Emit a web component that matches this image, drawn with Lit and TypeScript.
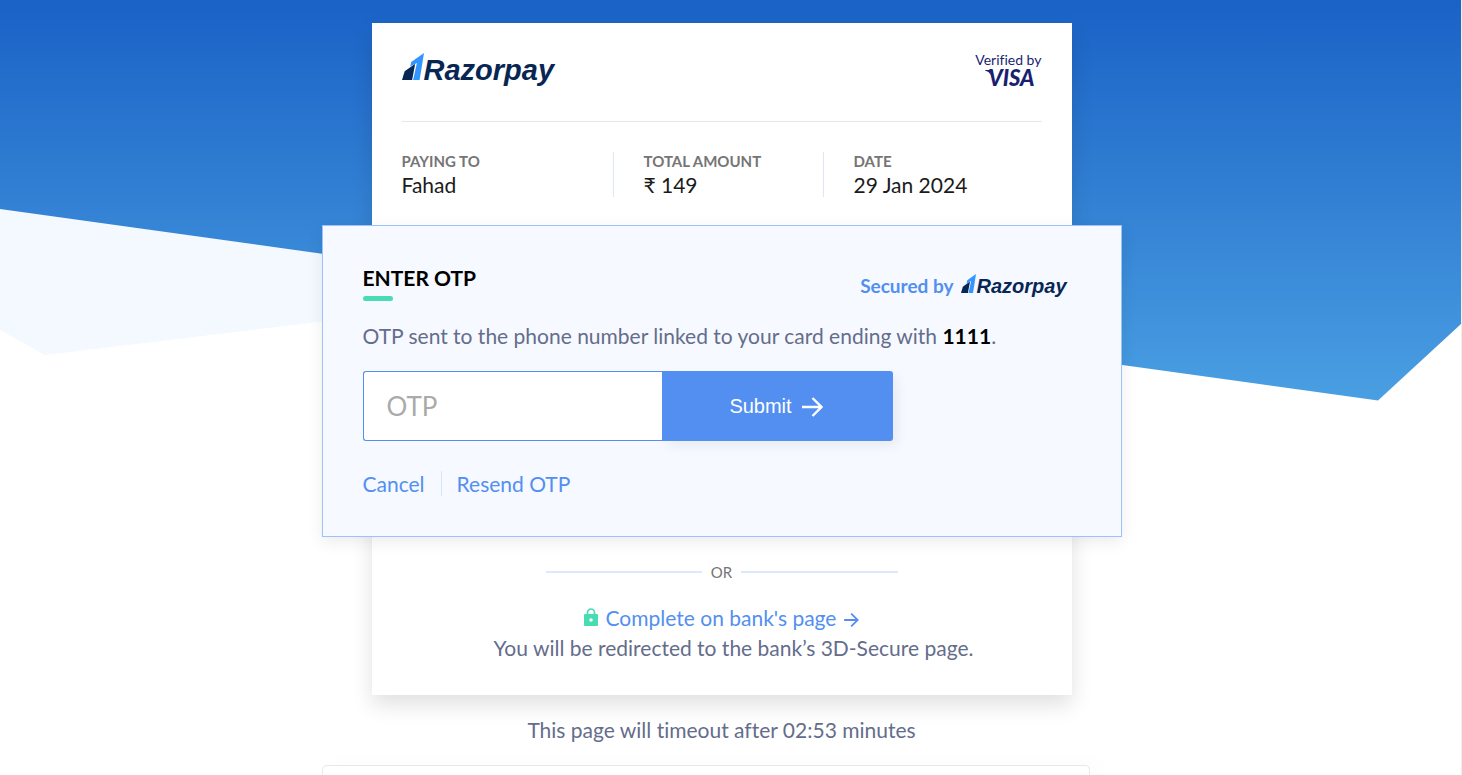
import { LitElement, html, css, svg } from "lit";
import { customElement, property, state } from "lit/decorators.js";

@customElement("razorpay-logo")
class RazorpayLogo extends LitElement {
  static styles = css`
    :host {
      display: inline-flex;
      align-items: flex-end;
      color: #072654;
      font: italic 700 29px/36px "Liberation Sans", Arial, sans-serif;
    }
    .mark {
      display: block;
      width: 22px;
      height: 27px;
      margin-bottom: 8px;
    }
    :host([small]) {
      font-size: 20px;
      line-height: 24px;
    }
    :host([small]) .mark {
      width: 15px;
      height: 19px;
      margin-bottom: 5px;
    }
  `;
  @property({ type: Boolean, reflect: true }) small = false;

  render() {
    return html`
      <svg class="mark" viewBox="0 0 23 26" preserveAspectRatio="none" aria-hidden="true">
        <path fill="#072654" d="M2.800 17.500 13.800 10.300 10.600 26H0z" />
        <path fill="#3395ff" d="M9.600 8.600 23 0 18.400 26h-6.800L15.600 9.600 8.600 13z" />
      </svg>
      <span>Razorpay</span>
    `;
  }
}

const arrow = svg`<path d="M0 10h19M10.500 1l9 9-9 9" fill="none" stroke="currentColor" stroke-width="2.400" />`;

@customElement("app-root")
class AppRoot extends LitElement {
  static styles = css`
    :host {
      display: block;
      position: relative;
      z-index: 0;
      background: #fff;
      color: #646d8b;
      font: 400 21px/30px Lato, "Noto Sans", sans-serif;
      font-variant-ligatures: none;
    }
    * {
      box-sizing: border-box;
    }
    a {
      color: #528ff0;
      text-decoration: none;
    }
    h1,
    p,
    dl,
    dd {
      margin: 0;
    }
    .backdrop {
      position: absolute;
      z-index: -1;
      top: 0;
      left: 0;
      width: 100%;
      height: 401px;
    }
    .page {
      display: flex;
      flex-direction: column;
      align-items: center;
      min-height: 100vh;
      padding: 23px 18px 0 0;
      border-right: 1px solid #eee;
    }
    .card {
      width: 100%;
      max-width: 700px;
      padding: 0 30px 32px;
      background: #fff;
      box-shadow: 0 10px 20px rgba(0, 0, 0, 0.12);
    }
    .top {
      display: flex;
      justify-content: space-between;
      align-items: flex-start;
      height: 99px;
      padding-top: 29px;
      border-bottom: 1px solid #e4e6ea;
    }
    .visa {
      display: flex;
      flex-direction: column;
      align-items: center;
      color: #1a1f71;
      font-size: 14px;
      line-height: 15px;
    }
    .visa b {
      display: flex;
      padding-left: 3px;
      font-style: italic;
      font-weight: 900;
      font-size: 22px;
      line-height: 22px;
    }
    .swash {
      width: 6px;
      height: 5px;
      margin: 3px -3px 0 0;
    }
    .facts {
      display: grid;
      grid-template-columns: 212px 210px 1fr;
      padding: 30px 0 28px;
    }
    .fact + .fact {
      padding-left: 30px;
    }
    .fact:not(:last-child) {
      border-right: 1px solid #dfe7f6;
    }
    dt {
      color: #757575;
      font-size: 15px;
      font-weight: 700;
      line-height: 19px;
    }
    dd {
      padding-top: 2px;
      color: #1b1b1b;
      line-height: 24px;
    }
    .panel {
      margin: 0 -80px;
      padding: 40px;
      background: #f6f9ff;
      border: 1px solid #9cc2fb;
      box-shadow: 0 5px 15px rgba(0, 0, 0, 0.08);
    }
    .panel-head {
      display: flex;
      justify-content: space-between;
      padding-right: 14px;
    }
    h1 {
      color: #000;
      font-size: 21px;
      font-weight: 700;
      line-height: 24px;
    }
    h1::after {
      content: "";
      display: block;
      width: 30px;
      height: 5px;
      margin-top: 6px;
      border-radius: 3px;
      background: #49dbb4;
    }
    .secured {
      display: flex;
      align-items: center;
      gap: 8px;
      height: 40px;
      color: #528ff0;
      font-size: 19px;
      font-weight: 700;
    }
    .sent {
      margin: 15px 0 20px;
    }
    .sent b {
      color: #000;
    }
    .otp {
      display: flex;
      max-width: 530px;
      height: 70px;
    }
    .otp input {
      flex: 1;
      min-width: 0;
      padding: 0 23px;
      border: 1px solid #528ff0;
      border-right: 0;
      border-radius: 3px 0 0 3px;
      background: #fff;
      color: #222;
      font: 400 26px Lato, "Noto Sans", sans-serif;
      outline: 0;
    }
    .otp input::placeholder {
      color: #aaa;
      opacity: 1;
    }
    .otp button {
      display: flex;
      align-items: center;
      justify-content: center;
      gap: 10px;
      width: 231px;
      padding: 0 8px 0 6px;
      border: 0;
      border-radius: 0 3px 3px 0;
      background: #528ff0;
      color: #fff;
      font: 400 20px "Liberation Sans", Arial, sans-serif;
      box-shadow: 5px 5px 12px rgba(0, 0, 0, 0.06);
    }
    .arrow {
      width: 21px;
      height: 20px;
      margin-top: 2px;
    }
    .actions {
      display: flex;
      margin-top: 30px;
      line-height: 25px;
    }
    .actions a + a {
      margin-left: 16px;
      padding-left: 15px;
      border-left: 1px solid #d5e3fb;
    }
    .or {
      display: flex;
      align-items: center;
      gap: 9px;
      max-width: 352px;
      margin: 25px auto 0;
      color: #757575;
      font-size: 15px;
      line-height: 20px;
    }
    .or::before,
    .or::after {
      content: "";
      flex: 1;
      height: 2px;
      background: #dbe8fd;
    }
    .bank {
      display: flex;
      align-items: center;
      justify-content: center;
      gap: 8px;
      margin-top: 21px;
    }
    .lock {
      display: block;
      width: 14px;
      height: 18px;
      margin-bottom: 3px;
    }
    .small-arrow {
      width: 15px;
      height: 14px;
      margin-top: 3px;
    }
    .note {
      padding-left: 24px;
      text-align: center;
    }
    .timeout {
      margin: 20px 0;
    }
    .next {
      flex: 1;
      width: 100%;
      max-width: 768px;
      margin-right: 32px;
      border: 1px solid #e8e8e8;
      border-bottom: 0;
      border-radius: 5px 5px 0 0;
      background: #fff;
      box-shadow: 10px 0 20px rgba(0, 0, 0, 0.03);
    }
  `;

  @state() private facts = [
    ["PAYING TO", "Fahad"],
    ["TOTAL AMOUNT", "₹ 149"],
    ["DATE", "29 Jan 2024"],
  ];

  render() {
    return html`
      <svg class="backdrop" viewBox="0 0 1462 401" preserveAspectRatio="none" aria-hidden="true">
        <defs>
          <linearGradient id="sky" x1="0" y1="0" x2="0" y2="1">
            <stop offset="0" stop-color="#1a62c6" />
            <stop offset="1" stop-color="#4a9fe2" />
          </linearGradient>
        </defs>
        <path fill="#f4f8ff" d="M0 200 700 290V276L45 355 0 330z" />
        <path fill="url(#sky)" d="M0 0H1461V324L1378 400.500 0 209z" />
      </svg>
      <main class="page">
        <section class="card">
          <header class="top">
            <razorpay-logo></razorpay-logo>
            <div class="visa">
              <span>Verified by</span>
              <b><svg class="swash" viewBox="0 0 6 5" aria-hidden="true"><path fill="currentColor" d="M0 0h5l1 5Q4 1.500 0 .6z" /></svg>VISA</b>
            </div>
          </header>
          <dl class="facts">
            ${this.facts.map(([k, v]) => html`<div class="fact"><dt>${k}</dt><dd>${v}</dd></div>`)}
          </dl>
          <div class="panel">
            <div class="panel-head">
              <h1>ENTER OTP</h1>
              <div class="secured"><span>Secured by</span><razorpay-logo small></razorpay-logo></div>
            </div>
            <p class="sent">OTP sent to the phone number linked to your card ending with <b>1111</b>.</p>
            <form class="otp" @submit=${(e: Event) => e.preventDefault()}>
              <input type="text" inputmode="numeric" placeholder="OTP" aria-label="OTP" />
              <button type="submit">Submit<svg class="arrow" viewBox="0 0 21 20" aria-hidden="true">${arrow}</svg></button>
            </form>
            <nav class="actions"><a href="#cancel">Cancel</a><a href="#resend">Resend OTP</a></nav>
          </div>
          <div class="or">OR</div>
          <a class="bank" href="#bank">
            <svg class="lock" viewBox="0 0 14 18" aria-hidden="true">
              <path fill="none" stroke="#49dbb4" stroke-width="1.700" d="M3.500 7V4.500a3.500 3.500 0 0 1 7 0V7" />
              <path fill="#49dbb4" fill-rule="evenodd" d="M1 6h12a1 1 0 0 1 1 1v10a1 1 0 0 1-1 1H1a1 1 0 0 1-1-1V7a1 1 0 0 1 1-1zM7 10.200a1.800 1.800 0 1 0 0 3.600 1.800 1.800 0 0 0 0-3.600z" />
            </svg>
            <span>Complete on bank's page</span>
            <svg class="small-arrow" viewBox="0 0 21 20" aria-hidden="true">
              <path d="M0 10h19M10 1l9.500 9-9.500 9" fill="none" stroke="currentColor" stroke-width="2.600" />
            </svg>
          </a>
          <p class="note">You will be redirected to the bank’s 3D-Secure page.</p>
        </section>
        <p class="timeout">This page will timeout after 02:53 minutes</p>
        <section class="next"></section>
      </main>
    `;
  }
}
